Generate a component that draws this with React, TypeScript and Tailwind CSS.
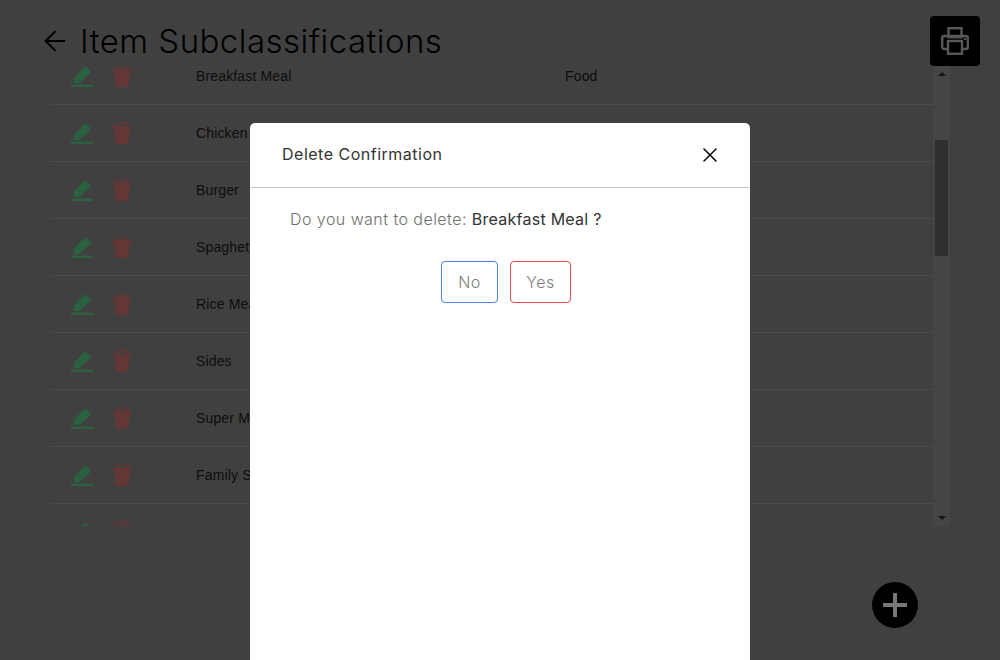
import { ArrowLeft, X } from "lucide-react";

const rows = [
  { name: "Breakfast Meal", category: "Food" },
  { name: "Chicken", category: "Food" },
  { name: "Burger", category: "Food" },
  { name: "Spaghetti", category: "Food" },
  { name: "Rice Meal", category: "Food" },
  { name: "Sides", category: "Food" },
  { name: "Super Meal", category: "Food" },
  { name: "Family Size", category: "Food" },
  { name: "", category: "" },
];

function EditIcon() {
  return (
    <svg viewBox="0 0 22 22" className="h-[22px] w-[22px]">
      <path
        d="M3 18v-5.500L13.500 2a1.500 1.500 0 0 1 2 0l4 4a1.500 1.500 0 0 1 0 2L8.500 18z"
        fill="#2b6040"
      />
      <rect x="0" y="19.500" width="22" height="2.500" fill="#2b6040" />
    </svg>
  );
}

function TrashIcon() {
  return (
    <svg viewBox="0 0 20 22" className="h-[22px] w-[20px]">
      <path d="M2 5h16l-1.600 16a1 1 0 0 1-1 1H4.600a1 1 0 0 1-1-1z" fill="#633736" />
      <path d="M0 4h20v2H0z" fill="#633736" />
      <path d="M5 4.500V1h10v3.500" fill="none" stroke="#633736" strokeWidth="1.600" />
    </svg>
  );
}

function PrinterIcon() {
  return (
    <svg viewBox="0 0 28 28" className="h-[28px] w-[28px]" fill="none" stroke="#585858" strokeWidth="2.400">
      <rect x="7.500" y="1.200" width="13" height="9" />
      <rect x="1.200" y="9" width="25.600" height="13" rx="2" />
      <rect x="7" y="14" width="14" height="12.800" fill="#000000" />
      <rect x="23" y="11" width="2" height="2" fill="#585858" stroke="none" />
    </svg>
  );
}

function PlusIcon() {
  return (
    <svg viewBox="0 0 24 24" className="h-[24px] w-[24px]" fill="#787878">
      <rect x="0" y="10" width="24" height="4" />
      <rect x="10" y="0" width="4" height="24" />
    </svg>
  );
}

export default function App() {
  return (
    <div className="relative h-[660px] overflow-hidden bg-[#404040] font-['Liberation_Sans',sans-serif]">
      <header className="flex h-[66px] items-start justify-between pl-[39px] pr-[20px] pt-[16px]">
        <div className="flex items-center gap-[9px]">
          <ArrowLeft className="h-[32px] w-[32px] text-black" strokeWidth={1.500} />
          <h1 className="font-['Inter',sans-serif] text-[33px] font-light leading-[50px] tracking-[0.46px] text-black">
            Item Subclassifications
          </h1>
        </div>
        <button className="flex h-[50px] w-[50px] items-center justify-center rounded-[4px] bg-black">
          <PrinterIcon />
        </button>
      </header>

      <div className="ml-[50px] flex h-[460px] w-[900px]">
        <div className="flex-1 overflow-hidden">
          <div className="-mt-[18px]">
            {rows.map((row, i) => (
              <div
                key={i}
                className="flex h-[57px] items-center border-b border-[#4c4c4c] text-[14px] tracking-[0.15px] text-[#0d0d0d]"
              >
                <div className="ml-[21px] flex w-[125px] items-center gap-[19px]">
                  <EditIcon />
                  <TrashIcon />
                </div>
                <span className="w-[369px]">{row.name}</span>
                <span>{row.category}</span>
              </div>
            ))}
          </div>
        </div>
        <div className="flex w-[17px] flex-col bg-[#454545]">
          <div className="flex h-[16px] items-center justify-center">
            <div className="h-0 w-0 border-x-[4px] border-b-[4px] border-x-transparent border-b-[#111111]" />
          </div>
          <div className="mx-[2px] mt-[58px] h-[116px] bg-[#2f2f2f]" />
          <div className="flex-1" />
          <div className="flex h-[16px] items-center justify-center">
            <div className="h-0 w-0 border-x-[4px] border-t-[4px] border-x-transparent border-t-[#111111]" />
          </div>
        </div>
      </div>

      <button className="absolute left-[872px] top-[582px] flex h-[46px] w-[46px] items-center justify-center rounded-full bg-black">
        <PlusIcon />
      </button>

      <div className="absolute left-[250px] top-[123px] h-[560px] w-[500px] rounded-[5px] bg-white font-['Inter',sans-serif]">
        <div className="flex h-[65px] items-center justify-between border-b border-[#c8c8c8] pl-[32px] pr-[28px]">
          <span className="mb-[2px] text-[16px] tracking-[0.5px] text-[#333333]">Delete Confirmation</span>
          <X className="h-[24px] w-[24px] text-black" strokeWidth={1.500} />
        </div>
        <p className="pl-[40px] pt-[19px] text-[16px] font-light leading-[24px] tracking-[0.45px] text-[#707070]">
          Do you want to delete:{" "}
          <span className="font-normal tracking-[0.25px] text-[#333333]">Breakfast Meal ?</span>
        </p>
        <div className="ml-[191px] mt-[30px] flex gap-[12px] text-[16px] font-light tracking-[0.5px] text-[#808080]">
          <button className="h-[42px] w-[57px] rounded-[4px] border border-[#4a86e8]">No</button>
          <button className="h-[42px] w-[61px] rounded-[4px] border border-[#e8474c]">Yes</button>
        </div>
      </div>
    </div>
  );
}
